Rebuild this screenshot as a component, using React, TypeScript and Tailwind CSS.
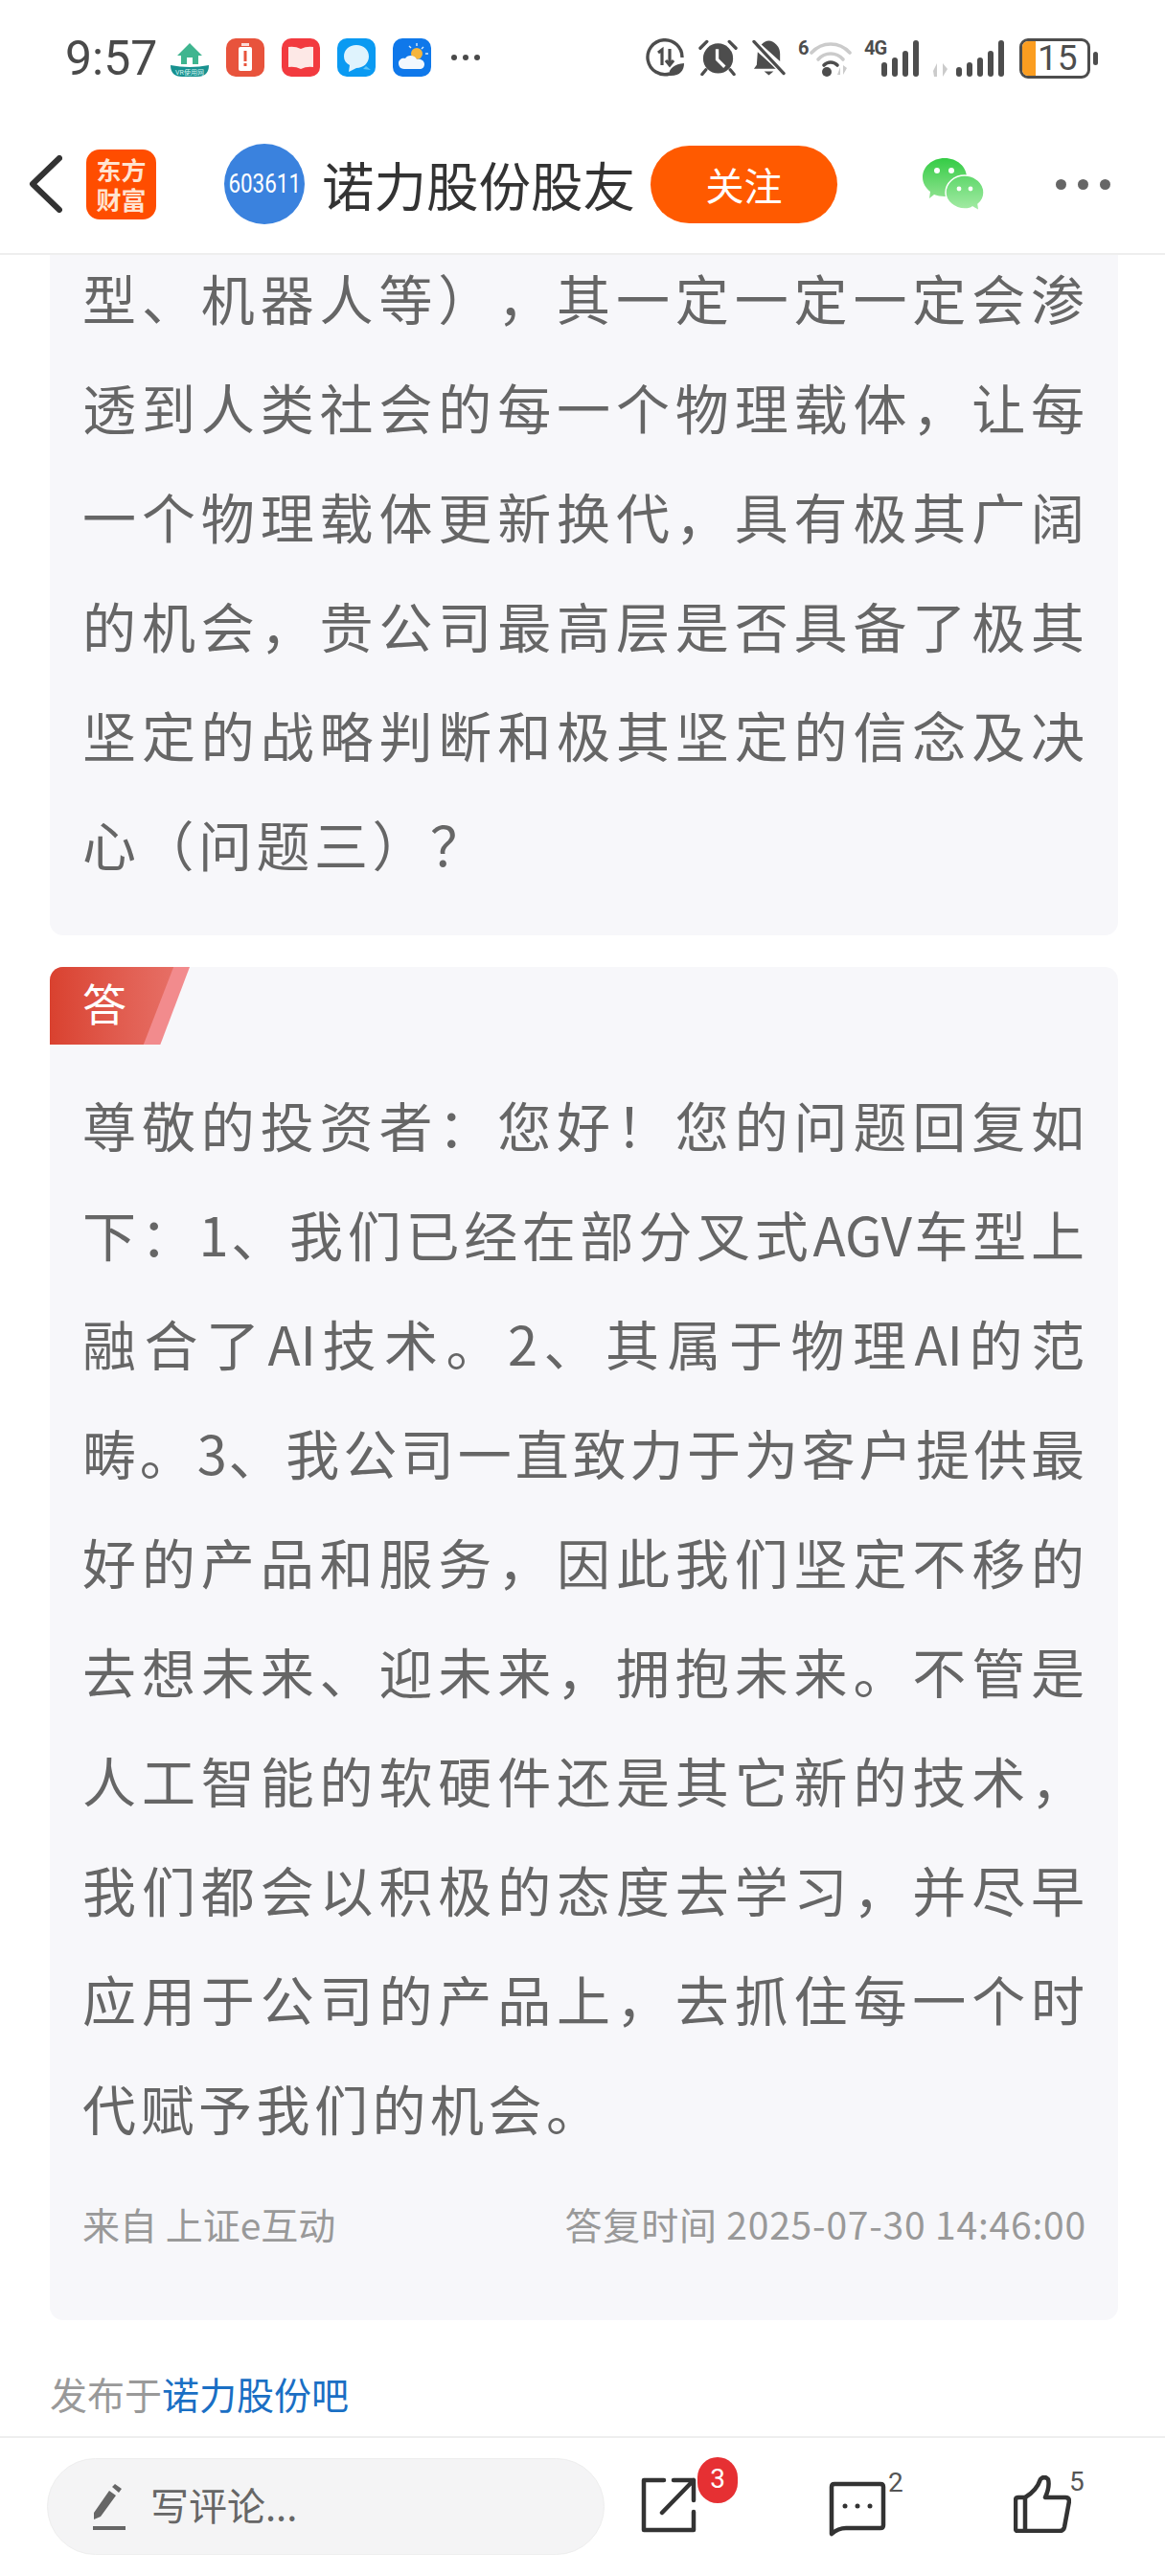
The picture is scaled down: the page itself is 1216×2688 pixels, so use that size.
import React from 'react'

const question = [
  '型、机器人等），其一定一定一定会渗',
  '透到人类社会的每一个物理载体，让每',
  '一个物理载体更新换代，具有极其广阔',
  '的机会，贵公司最高层是否具备了极其',
  '坚定的战略判断和极其坚定的信念及决',
  '心（问题三）？',
]

const answer = [
  '尊敬的投资者：您好！您的问题回复如',
  '下：1、我们已经在部分叉式AGV车型上',
  '融合了AI技术。2、其属于物理AI的范',
  '畴。3、我公司一直致力于为客户提供最',
  '好的产品和服务，因此我们坚定不移的',
  '去想未来、迎未来，拥抱未来。不管是',
  '人工智能的软硬件还是其它新的技术，',
  '我们都会以积极的态度去学习，并尽早',
  '应用于公司的产品上，去抓住每一个时',
  '代赋予我们的机会。',
]

// latin runs sit tight in the original, only the CJK gets spread out
function Line({ text, last }: { text: string; last: boolean }) {
  const parts = text.split(/([A-Za-z0-9]+)/)
  return (
    <span className={last ? 'block tracking-[4.5px]' : 'block tracking-[2px] [text-align-last:justify]'}>
      {parts.map((p, i) =>
        i % 2 === 1 ? (
          <span key={i} className="tracking-normal">{p}</span>
        ) : (
          <React.Fragment key={i}>{p}</React.Fragment>
        ),
      )}
    </span>
  )
}

function VrHomeIcon() {
  return (
    <svg viewBox="0 0 40 36" className="w-[40px] h-[36px]">
      <path d="M20 1 L33 14 H29 V23 H11 V14 H7 Z" fill="#3fb58f" />
      <rect x="17" y="16" width="6" height="7" fill="#fff" />
      <path d="M0 24 Q20 28 40 24 Q40 36 28 36 H12 Q0 36 0 24 Z" fill="#17918f" />
      <text x="20" y="34" textAnchor="middle" fontSize="7" fill="#d8f5f2" fontFamily="Roboto, sans-serif">VR使用网</text>
    </svg>
  )
}

function BatteryAlertIcon() {
  return (
    <svg viewBox="0 0 40 40" className="w-[40px] h-[40px]">
      <rect width="40" height="40" rx="10" fill="#e8533c" />
      <rect x="16" y="5" width="8" height="3" fill="#fff" opacity="0.8" />
      <rect x="13" y="9" width="14" height="25" rx="2" fill="#fff" />
      <rect x="18.5" y="13" width="3" height="11" fill="#e8533c" />
      <rect x="18.5" y="26" width="3" height="3" fill="#e8533c" />
    </svg>
  )
}

function BookIcon() {
  return (
    <svg viewBox="0 0 40 40" className="w-[40px] h-[40px]">
      <rect width="40" height="40" rx="10" fill="#f23a3f" />
      <path d="M7 9 Q14 8 20 11 Q26 8 33 9 V30 Q26 29 20 32 Q14 29 7 30 Z" fill="#fde8e6" />
    </svg>
  )
}

function MessageIcon() {
  return (
    <svg viewBox="0 0 40 40" className="w-[40px] h-[40px]">
      <rect width="40" height="40" rx="10" fill="#0a9af2" />
      <path d="M20 7 C28 7 33 12 33 19 C33 26 27 31 20 31 L12 35 L13 28 C9 26 7 23 7 19 C7 12 12 7 20 7 Z" fill="#dff3fd" />
      <path d="M30 29 L35 33 L27 32 Z" fill="#5cc3f7" />
    </svg>
  )
}

function WeatherIcon() {
  return (
    <svg viewBox="0 0 40 40" className="w-[40px] h-[40px]">
      <rect width="40" height="40" rx="10" fill="#0f78ea" />
      <circle cx="25" cy="16" r="6" fill="#f5b53c" />
      <path d="M25 5 V8 M34 16 H37 M17 8 L19 10 M32 9 L30 11" stroke="#d7eafc" strokeWidth="1.4" />
      <path d="M12 32 C7 32 6 28 6 26 C6 22 10 20 13 21 C15 17 23 17 25 22 C30 21 33 24 33 27 C33 30 31 32 28 32 Z" fill="#f2f8fe" />
    </svg>
  )
}

function DataSaverIcon() {
  return (
    <svg viewBox="0 0 40 40" className="w-[40px] h-[40px]" fill="none">
      <path d="M25 37 A18 18 0 1 1 38 20" stroke="#4d4d4d" strokeWidth="3.4" />
      <path d="M13 15 L17 12 V28 M25 11 V27 M21 23 L25 28 L29 23" stroke="#4d4d4d" strokeWidth="3.2" />
      <path d="M24 39 C24 31 30 27 40 26 C40 34 35 40 24 39 Z" fill="#4d4d4d" />
    </svg>
  )
}

function AlarmIcon() {
  return (
    <svg viewBox="0 0 42 40" className="w-[41px] h-[40px]" fill="none">
      <circle cx="21" cy="21" r="16" fill="#4d4d4d" />
      <path d="M20 11 V22 L28 30" stroke="#fff" strokeWidth="3.4" />
      <path d="M2 10 L9 3 M40 10 L33 3 M8 33 L4 38 M34 33 L38 38" stroke="#4d4d4d" strokeWidth="3.4" strokeLinecap="round" />
    </svg>
  )
}

function BellOffIcon() {
  return (
    <svg viewBox="0 0 36 40" className="w-[35px] h-[40px]" fill="none">
      <path d="M6 14 L26 32 H2 L5 28 Z M10 6 Q18 -2 26 6 Q30 10 30 16 V24 Z" fill="#4d4d4d" />
      <path d="M13 35 H23 L18 39 Z" fill="#4d4d4d" />
      <path d="M2 3 L34 37" stroke="#fff" strokeWidth="6" />
      <path d="M2 3 L34 37" stroke="#4d4d4d" strokeWidth="3.4" strokeLinecap="round" />
    </svg>
  )
}

function WifiIcon() {
  return (
    <svg viewBox="0 0 44 40" className="w-[44px] h-[40px]" fill="none">
      <path d="M2 15 C13 3 31 3 42 15" stroke="#cbcbcb" strokeWidth="3.6" strokeLinecap="round" />
      <path d="M9 22 C16 14 28 14 35 22" stroke="#cbcbcb" strokeWidth="3.6" strokeLinecap="round" />
      <path d="M15 28 C19 24 25 24 29 28" stroke="#4d4d4d" strokeWidth="3.6" strokeLinecap="round" />
      <circle cx="18" cy="35" r="5" fill="#4d4d4d" />
      <path d="M29 38 H32 V30 Z M35 28 V38 L39 31 Z" fill="#cbcbcb" />
    </svg>
  )
}

function SignalBars({ withArrows }: { withArrows?: boolean }) {
  const bars = [10, 15, 20, 27, 38]
  return (
    <div className="flex items-end gap-[5px] h-[40px]">
      {withArrows && (
        <svg viewBox="0 0 18 14" className="w-[18px] h-[14px] mr-[1px]">
          <path d="M0 8 L4 0 V14 H1 Z M10 0 V14 L15 6 Z" fill="#cbcbcb" />
        </svg>
      )}
      {bars.slice(withArrows ? 0 : 1).map((h, i) => (
        <div key={i} className="w-[6px] rounded-full bg-[#4d4d4d]" style={{ height: h }} />
      ))}
    </div>
  )
}

function WechatIcon() {
  return (
    <svg viewBox="0 0 66 56" className="w-[66px] h-[56px]">
      <defs>
        <linearGradient id="wa" x1="0" y1="0" x2="0" y2="1">
          <stop offset="0" stopColor="#34cc45" />
          <stop offset="1" stopColor="#8ee28f" />
        </linearGradient>
        <linearGradient id="wb" x1="0" y1="0" x2="0" y2="1">
          <stop offset="0" stopColor="#5fd86b" />
          <stop offset="1" stopColor="#a6eba6" />
        </linearGradient>
      </defs>
      <path d="M24 1 C37 1 47 10 47 21 C47 32 37 41 24 41 C20 41 16 40 13 39 L8 43 L9 36 C4 32 1 27 1 21 C1 10 11 1 24 1 Z" fill="url(#wa)" />
      <circle cx="16" cy="14" r="3" fill="#fff" />
      <circle cx="31" cy="14" r="3" fill="#fff" />
      <path d="M45 19 C56 19 65 27 65 37 C65 42 63 46 59 49 L60 56 L53 52 C51 54 48 54 45 54 C34 54 25 46 25 37 C25 27 34 19 45 19 Z" fill="url(#wb)" stroke="#fff" strokeWidth="1.5" />
      <circle cx="39" cy="33" r="2.4" fill="#fff" />
      <circle cx="51" cy="33" r="2.4" fill="#fff" />
    </svg>
  )
}

export default function App() {
  return (
    <div
      lang="zh-CN"
      className="w-[1216px] h-[2688px] flex flex-col overflow-hidden bg-white [text-spacing-trim:space-all] font-['Noto_Sans_CJK_SC','Noto_Sans',sans-serif]"
    >
      {/* Status bar */}
      <div className="h-[122px] flex items-start pt-[40px] shrink-0">
        <span className="ml-[68px] w-[95px] text-[50px] leading-[42px] text-[#4a4a4a] font-['Roboto',sans-serif]">9:57</span>
        <div className="ml-[15px] flex items-end gap-[18px]">
          <VrHomeIcon />
          <BatteryAlertIcon />
          <BookIcon />
          <MessageIcon />
          <WeatherIcon />
        </div>
        <div className="ml-[21px] mt-[17px] flex gap-[6px]">
          <i className="w-[6px] h-[6px] rounded-full bg-[#4a4a4a]" />
          <i className="w-[6px] h-[6px] rounded-full bg-[#4a4a4a]" />
          <i className="w-[6px] h-[6px] rounded-full bg-[#4a4a4a]" />
        </div>
        <div className="ml-[173px] flex items-start">
          <DataSaverIcon />
          <div className="ml-[15px]"><AlarmIcon /></div>
          <div className="ml-[15px]"><BellOffIcon /></div>
          <span className="ml-[13px] w-[10px] text-[20px] leading-[20px] font-bold text-[#4d4d4d] font-['Roboto',sans-serif]">6</span>
          <div className="ml-[2px]"><WifiIcon /></div>
          <span className="ml-[13px] w-[28px] text-[20px] leading-[20px] font-bold tracking-[-1px] text-[#4d4d4d] font-['Roboto',sans-serif]">4G</span>
          <div className="-ml-[10px]"><SignalBars /></div>
          <div className="ml-[15px]"><SignalBars withArrows /></div>
          <div className="ml-[16px] w-[74px] h-[42px] rounded-[9px] border-[3px] border-[#4d4d4d] flex overflow-hidden">
            <div className="w-[14px] bg-[#fb9d20]" />
            <span className="ml-[2px] text-[37px] leading-[36px] text-[#4d4d4d] font-['Roboto',sans-serif]">15</span>
          </div>
          <div className="ml-[3px] mt-[14px] w-[5px] h-[14px] rounded-full bg-[#4d4d4d]" />
        </div>
      </div>

      {/* Nav bar */}
      <div className="h-[144px] shrink-0 border-b-2 border-[#eeeeee] flex items-center">
        <svg viewBox="0 0 36 60" className="ml-[29px] w-[36px] h-[60px] mb-[2px]" fill="none">
          <path d="M33 3 L5 30 L33 57" stroke="#333333" strokeWidth="6" strokeLinecap="round" strokeLinejoin="round" />
        </svg>
        <div className="ml-[25px] w-[73px] h-[73px] rounded-[14px] bg-[#ff4d00] flex items-center justify-center text-center text-[#ffe3d0] text-[26px] leading-[31px] font-bold mb-[2px]">
          <p>东方<br />财富</p>
        </div>
        <div className="ml-[71px] w-[84px] h-[84px] rounded-full bg-[#3a82de] flex items-center justify-center text-white text-[28px] font-['Roboto',sans-serif] mb-[2px]">
          <span className="scale-x-[0.8]">603611</span>
        </div>
        <span className="ml-[18px] w-[326px] text-[54.5px] leading-none whitespace-nowrap text-[#333333] mb-[2px]">诺力股份股友</span>
        <div className="ml-[17px] w-[195px] h-[81px] rounded-full bg-[#ff5a00] text-white text-[40px] flex items-center justify-center mb-[2px]">关注</div>
        <div className="ml-[88px] mb-[2px]"><WechatIcon /></div>
        <div className="ml-[74px] flex gap-[12px] mb-[1px]">
          <i className="w-[11px] h-[11px] rounded-full bg-[#666666]" />
          <i className="w-[11px] h-[11px] rounded-full bg-[#666666]" />
          <i className="w-[11px] h-[11px] rounded-full bg-[#666666]" />
        </div>
      </div>

      {/* Scroll content */}
      <div className="flex-1 min-h-0 overflow-hidden pl-[52px] pr-[49px]">
        <div className="bg-[#f7f7fa] rounded-b-[14px] pl-[34px] pr-[33px] pb-[39px] overflow-hidden">
          <p className="-mt-[13px] text-[56px] leading-[114px] text-[#666666]">
            {question.map((l, i) => (
              <Line key={i} text={l} last={i === question.length - 1} />
            ))}
          </p>
        </div>

        <div className="mt-[33px] bg-[#f7f7fa] rounded-[14px]">
          <div className="relative w-[146px] h-[81px] rounded-tl-[14px] overflow-hidden bg-[#f28b8d] [clip-path:polygon(0_0,100%_0,79%_100%,0_100%)]">
            <div className="h-full bg-gradient-to-r from-[#d9412f] to-[#e8746c] [clip-path:polygon(0_0,88.5%_0,67%_100%,0_100%)] pl-[34px] text-white text-[46px] leading-[72px]">答</div>
          </div>
          <div className="pl-[34px] pr-[33px] pt-[26px] pb-[72px]">
            <p className="text-[56px] leading-[114px] text-[#666666]">
              {answer.map((l, i) => (
                <Line key={i} text={l} last={i === answer.length - 1} />
              ))}
            </p>
            <div className="mt-[35px] flex justify-between text-[39px] leading-[58px] text-[#999999]">
              <span>来自 上证e互动</span>
              <span className="tracking-[0.8px]">答复时间 2025-07-30 14:46:00</span>
            </div>
          </div>
        </div>

        <p className="mt-[47px] text-[39px] leading-[58px] text-[#999999]">
          发布于<span className="text-[#1a6fc4]">诺力股份吧</span>
        </p>
      </div>

      {/* Bottom bar */}
      <div className="h-[146px] shrink-0 border-t-2 border-[#eeeeee] flex items-start pt-[21px]">
        <div className="ml-[49px] w-[582px] h-[101px] rounded-full bg-[#f4f4f5] border border-[#eeeeee] flex items-center">
          <svg viewBox="0 0 34 48" className="ml-[47px] w-[34px] h-[48px]">
            <path d="M1 30 L17 7 L24 12 L8 34 L1 37 Z M20 3 L23 0 L30 5 L27 9 Z" fill="#666666" />
            <rect x="0" y="44" width="34" height="4" fill="#666666" />
          </svg>
          <span className="ml-[26px] mb-[6px] text-[40px] leading-none text-[#666666]">写评论...</span>
        </div>

        <div className="relative ml-[38px] mt-[20px]">
          <svg viewBox="0 0 58 58" className="w-[58px] h-[58px]" fill="none" stroke="#333333" strokeWidth="4.5" strokeLinecap="round" strokeLinejoin="round">
            <path d="M24 3 H3 V55 H55 V36" />
            <path d="M22 37 L55 3 M34 3 H55 V24" />
          </svg>
          <span className="absolute -top-[21px] left-[59px] w-[42px] h-[48px] rounded-full bg-[#e63033] text-white text-[28px] leading-[46px] text-center font-['Roboto',sans-serif]">3</span>
        </div>

        <div className="relative ml-[138px] mt-[24px]">
          <svg viewBox="0 0 60 58" className="w-[60px] h-[58px]" fill="none" stroke="#333333" strokeWidth="4.5" strokeLinecap="round" strokeLinejoin="round">
            <path d="M3 55 V6 Q3 3 6 3 H54 Q57 3 57 6 V46 Q57 49 54 49 H18 Q10 49 3 55 Z" />
            <circle cx="17" cy="26" r="2.5" fill="#333333" stroke="none" />
            <circle cx="30" cy="26" r="2.5" fill="#333333" stroke="none" />
            <circle cx="43" cy="26" r="2.5" fill="#333333" stroke="none" />
          </svg>
          <span className="absolute -top-[14px] left-[62px] text-[28px] leading-[32px] text-[#555555] font-['Roboto',sans-serif]">2</span>
        </div>

        <div className="relative ml-[133px] mt-[18px]">
          <svg viewBox="0 0 60 60" className="w-[60px] h-[60px]" fill="none" stroke="#333333" strokeWidth="4.5" strokeLinecap="round" strokeLinejoin="round">
            <path d="M12 58 H4 Q2 58 2 55 V26 Q2 23 5 23 H12 Q24 16 28 4 Q32 0 36 4 Q38 12 33 23 H54 Q58 23 58 27 L53 54 Q52 58 48 58 Z" />
            <path d="M12 23 V58" />
          </svg>
          <span className="absolute -top-[9px] left-[58px] text-[28px] leading-[32px] text-[#555555] font-['Roboto',sans-serif]">5</span>
        </div>
      </div>
    </div>
  )
}
